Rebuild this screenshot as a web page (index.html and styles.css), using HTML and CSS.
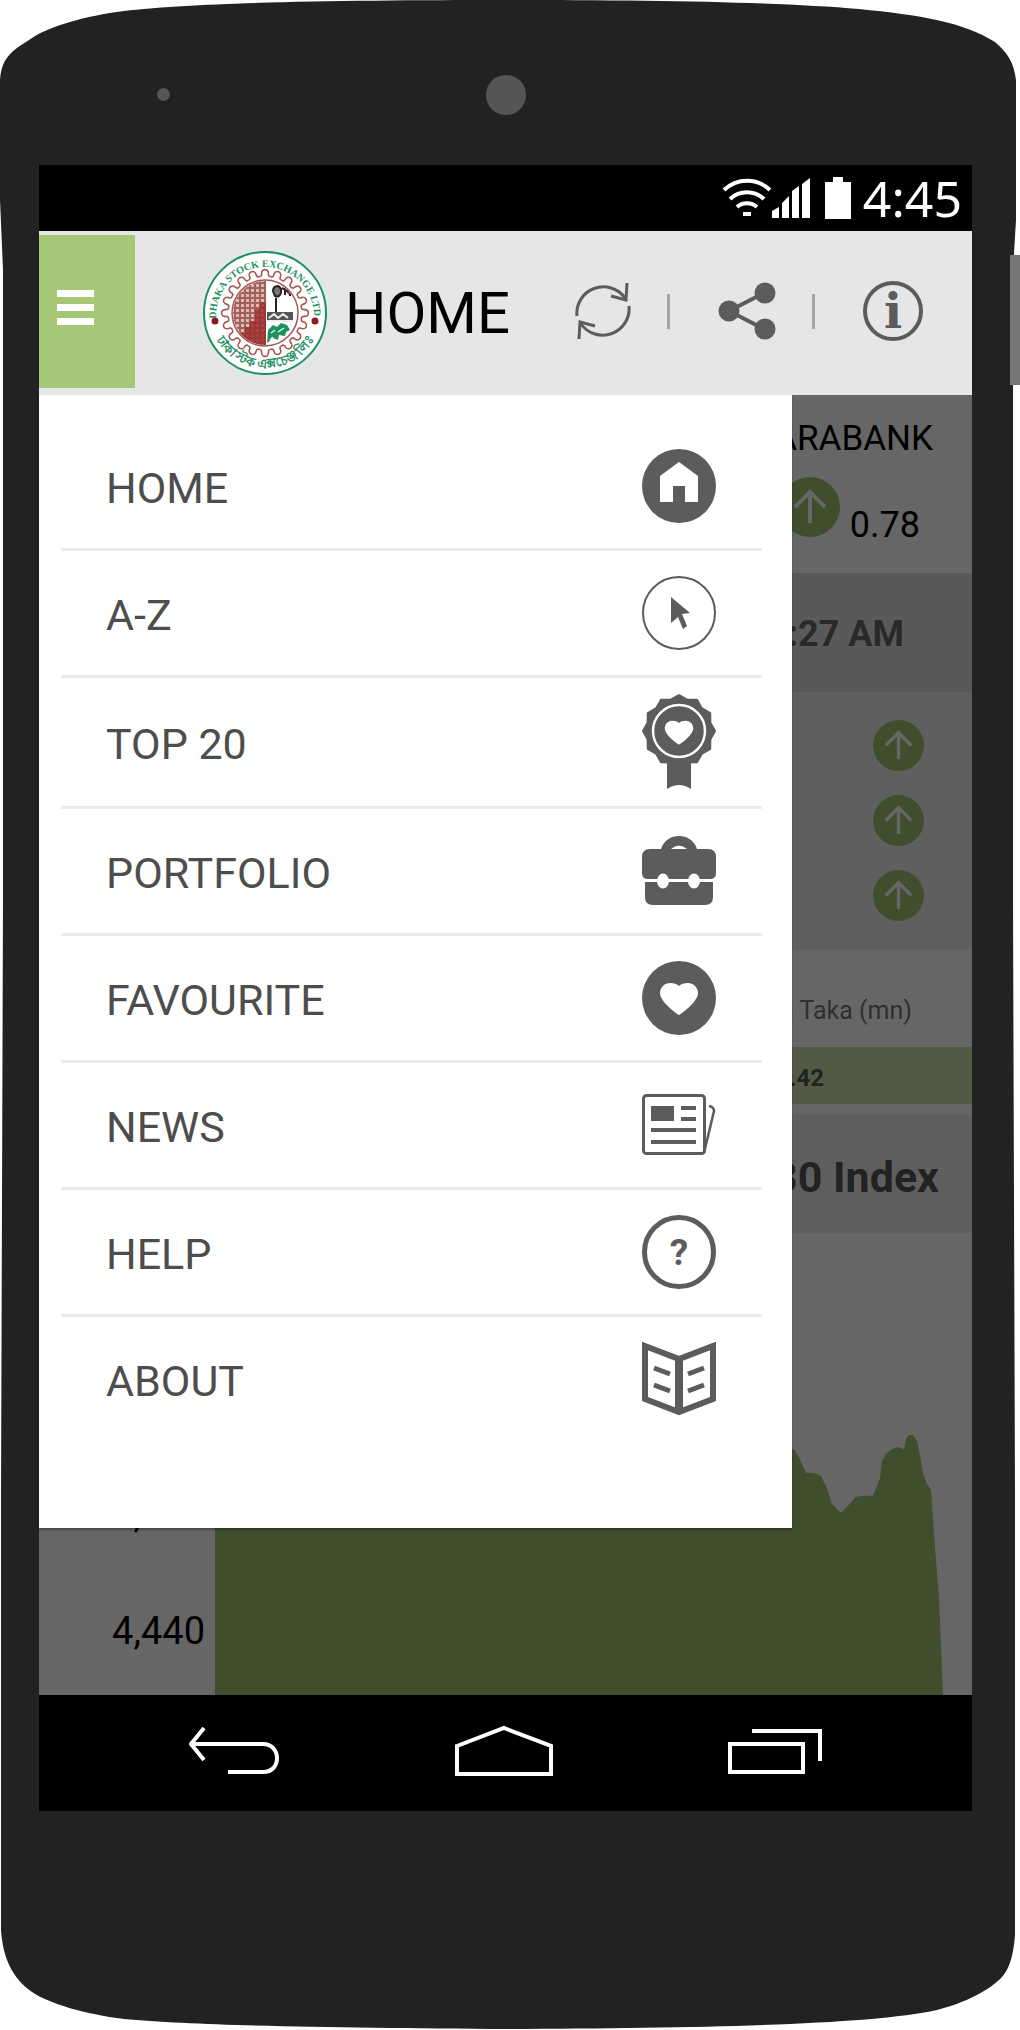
FILE: index.html
```html
<!DOCTYPE html>
<html lang="en">
<head>
    <meta charset="UTF-8">
    <meta name="viewport" content="width=device-width, initial-scale=1.0">
    <title>DSE Mobile - Home</title>
    <link rel="stylesheet" href="styles.css">
</head>
<body>
    <!-- shared shapes -->
    <svg class="defs" width="0" height="0" aria-hidden="true">
        <symbol id="up" viewBox="-30 -30 60 60">
            <circle r="30" fill="#a2c272"/>
            <path d="M0 16V-15M-15 0L0 -15L15 0" fill="none" stroke="#fff" stroke-width="4"/>
        </symbol>
        <symbol id="tooth" viewBox="-62 -62 124 124">
            <path d="M-5.8 -36.5Q-3 -36 -3.4 -40A3.4 3.4 0 0 1 3.4 -40Q3 -36 5.8 -36.5" fill="none" stroke="#a85550" stroke-width="1.6"/>
        </symbol>
        <symbol id="heart" viewBox="-20 -20 40 40">
            <path d="M0 17C-2 16 -19 4 -19 -5C-19 -11 -14 -15 -9 -15C-5 -15 -2 -14 0 -12C2 -14 5 -15 9 -15C14 -15 19 -11 19 -5C19 4 2 16 0 17Z" fill="#fff"/>
        </symbol>
    </svg>

    <div class="phone">
        <svg class="case" viewBox="0 0 1020 2030" preserveAspectRatio="none" aria-hidden="true">
            <path fill="#222" d="M0 80C2 55 14 50 32 38C50 26 85 16 124 11C200 2 350 0 507 0C650 0 780 2 859 9C920 15 963 22 995 42C1010 55 1014 65 1016 80V220L1013 270V900L1015 1500V1935C1013 1960 1008 1970 1002 1977C990 1990 965 2003 937 2010C870 2025 700 2028 507 2029C350 2028 200 2026 124 2019C85 2014 50 2004 32 1992C12 1978 3 1958 1 1930V1500L3 900V270L0 200Z"/>
            <rect x="1010" y="255" width="10" height="130" fill="#777"/>
        </svg>

        <div class="bezel">
            <span class="sensor"></span>
            <span class="camera"></span>
        </div>

        <div class="screen">
            <div class="status-bar">
                <svg width="50" height="40" viewBox="0 0 50 40" fill="none" stroke="#fff" stroke-width="4">
                    <path d="M2 12A33 33 0 0 1 48 12"/>
                    <path d="M8 21A25 25 0 0 1 42 21"/>
                    <path d="M15 29A15 15 0 0 1 35 29"/>
                    <path d="M21 36H29"/>
                </svg>
                <svg width="39" height="40" viewBox="0 0 39 40" fill="#fff">
                    <path d="M0 40V33L7 29V40ZM10 40V25L17 18V40ZM20 40V13L27 8V40ZM30 40V6L38 0V40Z"/>
                </svg>
                <svg class="battery" width="26" height="42" viewBox="0 0 26 42" fill="#fff">
                    <path d="M0 5H8V0H18V5H26V42H0Z"/>
                </svg>
                <span class="clock">4:45</span>
            </div>

            <header class="app-bar">
                <button class="menu-btn" aria-label="Menu"><span></span><span></span><span></span></button>
                <svg class="logo" viewBox="-62 -62 124 124" role="img" aria-label="Dhaka Stock Exchange">
                    <defs>
                        <path id="arc-top" d="M-49 3A49 49 0 1 1 49 3"/>
                        <path id="arc-bottom" d="M-54 14A56 56 0 0 0 54 14"/>
                        <pattern id="grid" width="5" height="5" patternUnits="userSpaceOnUse">
                            <rect width="5" height="5" fill="#a3605a"/>
                            <rect x="1" y="1" width="3" height="3" fill="#dcbab4"/>
                        </pattern>
                        <clipPath id="disc"><circle r="32"/></clipPath>
                    </defs>
                    <circle r="61" fill="#fff" stroke="#1d9060" stroke-width="2"/>
                    <text class="logo-text"><textPath href="#arc-top" startOffset="50%" text-anchor="middle">DHAKA STOCK EXCHANGE LTD.</textPath></text>
                    <text class="logo-text logo-text-bn"><textPath href="#arc-bottom" startOffset="50%" text-anchor="middle">ঢাকা স্টক এক্সচেঞ্জ লিঃ</textPath></text>
                    <circle cx="-50" cy="8" r="3.5" fill="#8c1c1c"/>
                    <circle cx="50" cy="8" r="3.5" fill="#8c1c1c"/>
                    <g id="gear">
                        <g id="gear-part">
                            <use href="#tooth" x="-62" y="-62" width="124" height="124"/>
                            <use href="#tooth" x="-62" y="-62" width="124" height="124" transform="rotate(18)"/>
                            <use href="#tooth" x="-62" y="-62" width="124" height="124" transform="rotate(36)"/>
                            <use href="#tooth" x="-62" y="-62" width="124" height="124" transform="rotate(54)"/>
                            <use href="#tooth" x="-62" y="-62" width="124" height="124" transform="rotate(72)"/>
                        </g>
                        <use href="#gear-part" transform="rotate(90)"/>
                        <use href="#gear-part" transform="rotate(180)"/>
                        <use href="#gear-part" transform="rotate(270)"/>
                    </g>
                    <g clip-path="url(#disc)">
                        <rect x="-33" y="-33" width="34" height="66" fill="url(#grid)"/>
                        <path d="M-26 33V20H-20V14H-15V8H-10V-4H-5V-11H1V33Z" fill="#9a3030" fill-opacity=".85"/>
                        <path d="M2 -1H28V9H2Z" fill="#555"/>
                        <path d="M4 5L9 1L13 5L18 1L23 5M2 8H28" stroke="#eee" stroke-width="2" fill="none"/>
                        <path d="M11 -1V-15M8 -22Q8 -27 13 -27Q17 -25 16 -20Q14 -15 10 -17ZM20 -25V-18M17 -25L25 -21V-17" stroke="#222" stroke-width="2" fill="#777"/>
                        <path d="M2 30L3 17L8 12L12 14L16 10L22 12L25 17L21 19L20 23L14 22L13 27L8 25Z" fill="#1d9060"/>
                        <path d="M6 20L10 17M13 19L19 15M5 27L8 24" stroke="#e3f3ea" stroke-width="1.5"/>
                    </g>
                    <circle r="33" fill="none" stroke="#a85550" stroke-width="1.5"/>
                </svg>
                <h1 class="title">HOME</h1>
                <div class="actions">
                    <button aria-label="Refresh">
                        <svg width="56" height="58" viewBox="-28 -29 56 58" fill="none" stroke="#5c5c5c" stroke-width="3">
                            <g id="turn"><path d="M-26 5A26.500 26.500 0 0 1 22 -13"/><path d="M24 -28L23 -11L8 -15"/></g>
                            <use href="#turn" transform="rotate(180)"/>
                        </svg>
                    </button>
                    <span class="sep"></span>
                    <button aria-label="Share">
                        <svg width="58" height="58" viewBox="0 0 58 58" fill="#5c5c5c">
                            <path d="M46 11L11 29L46 47" fill="none" stroke="#5c5c5c" stroke-width="4"/>
                            <circle cx="11" cy="29" r="10.500"/><circle cx="47" cy="11" r="10.500"/><circle cx="47" cy="47" r="10.500"/>
                        </svg>
                    </button>
                    <span class="sep"></span>
                    <button aria-label="Info">
                        <svg width="60" height="60" viewBox="-30 -30 60 60">
                            <circle r="28" fill="none" stroke="#5c5c5c" stroke-width="4"/>
                            <text class="info-i" y="17" text-anchor="middle">i</text>
                        </svg>
                    </button>
                </div>
            </header>

            <main class="content">
                <section class="ticker">
                    <div class="ticker-name">ALARABANK</div>
                    <div class="ticker-change">
                        <svg width="60" height="60"><use href="#up"/></svg>
                        <span>0.78</span>
                    </div>
                </section>
                <div class="time-bar">11:27 AM</div>
                <section class="trend">
                    <svg width="51" height="51"><use href="#up"/></svg>
                    <svg width="51" height="51"><use href="#up"/></svg>
                    <svg width="51" height="51"><use href="#up"/></svg>
                </section>
                <div class="value-label">Value in Taka (mn)</div>
                <div class="value-bar">5,312.42</div>
                <h2 class="index-title">DS30 Index</h2>
                <section class="chart">
                    <div class="axis"><span>4,460</span><span>4,440</span></div>
                    <svg class="area" viewBox="0 0 727 261" preserveAspectRatio="none">
                        <path fill="#a2c272" d="M0 261V40L120 60L260 30L400 50L520 20L578 14L584 24L590 38L598 38L605 41L611 53L616 69L625 78L634 69L640 62L648 61L657 61L664 44L666 26L670 19L676 14L682 12L688 14L690 4L693 0L697 0L701 6L704 20L707 39L711 49L715 55L718 99L723 163L727 261Z"/>
                    </svg>
                </section>

                <div class="overlay"></div>

                <nav class="drawer">
                    <ul>
                        <li><a href="#home"><span>HOME</span>
                            <svg width="74" height="74" viewBox="-37 -37 74 74">
                                <circle r="37" fill="#5c5c5c"/>
                                <path d="M0 -24L19 -10V16H6V0H-6V16H-19V-10Z" fill="#fff"/>
                            </svg>
                        </a></li>
                        <li><a href="#a-z"><span>A-Z</span>
                            <svg width="74" height="74" viewBox="-37 -37 74 74">
                                <circle r="36" fill="none" stroke="#5c5c5c" stroke-width="2"/>
                                <path d="M-8 -16L11 0L3 1L8 13L4 16L-1 4L-8 10Z" fill="#5c5c5c"/>
                            </svg>
                        </a></li>
                        <li><a href="#top-20"><span>TOP 20</span>
                            <svg width="74" height="96" viewBox="-37 -37 74 96">
                                <path d="M-12 26V58Q0 50 12 58V26Z" fill="#5c5c5c"/>
                                <path fill="#5c5c5c" stroke="#5c5c5c" stroke-width="2" stroke-linejoin="round" d="M0 -36L8.200 -31.400L18 -31.200L22.800 -22.800L31.200 -18L31.400 -8.200L36 0L31.400 8.200L31.200 18L22.800 22.800L18 31.200L8.200 31.400L0 34L-8.200 31.400L-18 31.200L-22.800 22.800L-31.200 18L-31.400 8.200L-36 0L-31.400 -8.200L-31.200 -18L-22.800 -22.800L-18 -31.200L-8.200 -31.400Z"/>
                                <circle r="26" fill="none" stroke="#fff" stroke-width="2.500"/>
                                <use href="#heart" x="-15" y="-14" width="30" height="30"/>
                            </svg>
                        </a></li>
                        <li><a href="#portfolio"><span>PORTFOLIO</span>
                            <svg width="74" height="70" viewBox="0 0 74 70" fill="#5c5c5c">
                                <path d="M8 13H19C22 4 29 0 37 0C45 0 52 4 55 13H66Q74 13 74 21V37Q74 43 68 43H6Q0 43 0 37V21Q0 13 8 13Z"/>
                                <path d="M3 46H71V61Q71 69 63 69H11Q3 69 3 61Z"/>
                                <path d="M29 13Q37 6 45 13Z" fill="#fff"/>
                                <ellipse cx="21" cy="45" rx="6" ry="7.500" fill="#fff"/><ellipse cx="52" cy="45" rx="6" ry="7.500" fill="#fff"/>
                            </svg>
                        </a></li>
                        <li><a href="#favourite"><span>FAVOURITE</span>
                            <svg width="74" height="74" viewBox="-37 -37 74 74">
                                <circle r="37" fill="#5c5c5c"/>
                                <use href="#heart" x="-20" y="-20" width="40" height="40"/>
                            </svg>
                        </a></li>
                        <li><a href="#news"><span>NEWS</span>
                            <svg width="74" height="62" viewBox="0 0 74 62" fill="none" stroke="#5c5c5c" stroke-width="3">
                                <rect x="1.500" y="1.500" width="61" height="58" rx="3"/>
                                <rect x="9" y="12" width="23" height="15" fill="#5c5c5c" stroke="none"/>
                                <path d="M39 14H54M39 25H54M9 36H54M9 48H54" stroke-width="4"/>
                                <path d="M67 12Q72 13 72 17L62 59" stroke-width="2.500"/>
                            </svg>
                        </a></li>
                        <li><a href="#help"><span>HELP</span>
                            <svg width="74" height="74" viewBox="-37 -37 74 74">
                                <circle r="34.500" fill="none" stroke="#5c5c5c" stroke-width="5"/>
                                <text class="help-mark" y="13" text-anchor="middle">?</text>
                            </svg>
                        </a></li>
                        <li><a href="#about"><span>ABOUT</span>
                            <svg width="74" height="74" viewBox="0 0 74 74" fill="none" stroke="#5c5c5c" stroke-width="6">
                                <path d="M3 4L37 17L71 4V57L37 70L3 57Z"/>
                                <path d="M37 16V70" stroke-width="8"/>
                                <path d="M12 26L28 32M12 43L28 49M62 26L46 32M62 43L46 49" stroke-width="5"/>
                            </svg>
                        </a></li>
                    </ul>
                </nav>
            </main>

            <div class="nav-bar">
                <button aria-label="Back">
                    <svg width="90" height="48" viewBox="0 0 90 48" fill="none" stroke="#fff" stroke-width="4">
                        <path d="M15 1L2 17L15 33M2 17H74C83 17 88 24 88 31C88 39 83 45 74 45H39"/>
                    </svg>
                </button>
                <button aria-label="Home">
                    <svg width="98" height="52" viewBox="0 0 98 52" fill="none" stroke="#fff" stroke-width="4">
                        <path d="M2 21L49 3L96 21V49H2Z"/>
                    </svg>
                </button>
                <button aria-label="Recent apps">
                    <svg width="94" height="48" viewBox="0 0 94 48" fill="none" stroke="#fff" stroke-width="4">
                        <path d="M2 17H75V45H2ZM24 4H92V34"/>
                    </svg>
                </button>
            </div>
        </div>
    </div>
</body>
</html>
```
FILE: styles.css
```css
* {
    box-sizing: border-box;
}
body {
    margin: 0;
    background: #fff;
    font-family: Roboto, "Liberation Sans", sans-serif;
}
svg {
    display: block;
    flex: none;
}
button {
    padding: 0;
    border: none;
    background: none;
    cursor: pointer;
}
.defs { position: absolute; }

/* phone body */
.phone {
    position: relative;
    padding: 0 48px 219px 39px;
}
.case {
    position: absolute;
    inset: 0;
    width: 100%;
    height: 100%;
}
.bezel {
    position: relative;
    display: grid;
    grid-template-columns: 1fr auto 1fr;
    align-items: center;
    height: 165px;
    padding-top: 24px;
}
.sensor {
    width: 13px;
    height: 13px;
    margin-left: 118px;
    border-radius: 50%;
    background: #555;
}
.camera {
    width: 40px;
    height: 40px;
    border-radius: 50%;
    background: #555;
}
.screen {
    position: relative;
    background: #fff;
}

/* status bar */
.status-bar {
    display: flex;
    align-items: center;
    justify-content: flex-end;
    height: 66px;
    padding-right: 10px;
    background: #000;
}
.battery { margin: 0 12px 0 14px; }
.clock {
    color: #fff;
    font-family: "Noto Sans", "Open Sans", sans-serif;
    font-size: 50px;
    line-height: 56px;
}

/* app bar */
.app-bar {
    display: flex;
    align-items: center;
    height: 164px;
    padding-right: 49px;
    background: #e5e6e8;
}
.menu-btn {
    display: flex;
    flex-direction: column;
    justify-content: center;
    gap: 7px;
    align-self: stretch;
    width: 96px;
    margin: 4px 0 7px;
    padding: 0 0 8px 18px;
    background: #a6c776;
}
.menu-btn span {
    width: 37px;
    height: 7px;
    background: #fff;
}
.logo {
    width: 124px;
    height: 124px;
    margin-left: 68px;
}
.logo-text {
    fill: #1d9060;
    font-family: "Liberation Serif", serif;
    font-size: 10px;
    font-weight: bold;
}
.logo-text-bn {
    font-size: 13px;
}
.title {
    margin: 0 0 0 18px;
    color: #000;
    font-size: 58px;
    font-weight: 400;
    line-height: 68px;
}
.actions {
    display: flex;
    align-items: center;
    margin-left: auto;
    padding-bottom: 4px;
}
.sep {
    width: 3px;
    height: 35px;
    margin: 0 48px 0 36px;
    background: #a5a5a5;
}
.info-i {
    fill: #5c5c5c;
    font-family: "DejaVu Serif", serif;
    font-size: 48px;
    font-weight: bold;
}

/* page under the drawer */
.content {
    position: relative;
    color: #000;
    font-size: 36px;
    line-height: 42px;
    text-align: right;
}
.ticker {
    height: 178px;
    padding: 23px 39px 0 0;
}
.ticker-name {
    font-size: 35px;
}
.ticker-change {
    display: flex;
    align-items: baseline;
    justify-content: flex-end;
    gap: 10px;
    margin-top: 17px;
    padding-right: 13px;
}
.time-bar {
    padding: 40px 68px 37px 0;
    background: #dfdfdf;
    color: #666;
    font-weight: bold;
}
.trend {
    display: flex;
    flex-direction: column;
    align-items: flex-end;
    gap: 24px;
    padding: 28px 48px 29px 0;
    background: #eee;
}
.value-label {
    padding: 46px 60px 21px 0;
    color: #777;
    font-size: 25px;
    line-height: 30px;
}
.value-bar {
    padding: 16px 148px 11px 0;
    background: #cde1af;
    color: #555;
    font-size: 24px;
    font-weight: bold;
    line-height: 30px;
}
.index-title {
    margin: 10px 0 0;
    padding: 37px 33px 30px 0;
    background: #eee;
    color: #555;
    font-size: 43px;
    font-weight: bold;
    line-height: 52px;
}
.chart {
    display: flex;
    align-items: flex-end;
    height: 462px;
    padding-right: 29px;
}
.axis {
    display: flex;
    flex-direction: column;
    gap: 73px;
    width: 176px;
    padding: 0 10px 42px 0;
    font-size: 38px;
    line-height: 44px;
}
.area {
    flex: 1;
    min-width: 0;
    height: 260px;
}
.overlay {
    position: absolute;
    inset: 0;
    background: rgba(0, 0, 0, 0.6);
}

/* drawer */
.drawer {
    position: absolute;
    top: 0;
    left: 0;
    width: calc(100% - 180px);
    height: 1133px;
    padding: 29px 30px 0 22px;
    background: #fff;
    box-shadow: 0 2px 2px rgba(0, 0, 0, 0.3);
}
.drawer ul {
    margin: 0;
    padding: 0;
    list-style: none;
}
.drawer li {
    border-bottom: 3px solid #ebebeb;
}
.drawer li:last-child {
    border-bottom: none;
}
.drawer a {
    display: flex;
    align-items: center;
    justify-content: space-between;
    min-height: 124px;
    padding: 16px 46px 16px 45px;
    color: #4d4d4d;
    font-size: 43px;
    line-height: 50px;
    text-decoration: none;
}
.drawer a span {
    padding-top: 4px;
}
.help-mark {
    fill: #5c5c5c;
    font-size: 37px;
    font-weight: bold;
}

/* android buttons */
.nav-bar {
    display: flex;
    align-items: center;
    justify-content: space-between;
    height: 116px;
    padding: 0 150px 4px;
    background: #000;
}
```
